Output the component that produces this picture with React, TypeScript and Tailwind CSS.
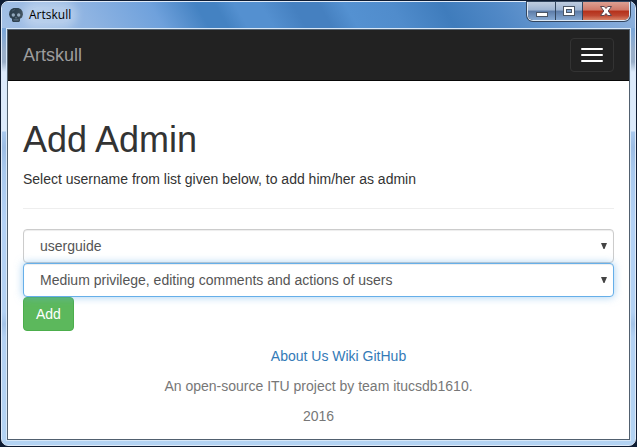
import React from "react";

function SkullIcon() {
  return (
    <svg viewBox="0 0 14 14" className="h-3.5 w-3.5 shrink-0" aria-hidden="true">
      <path
        d="M4.500 0h5l2.500 1.200L13.500 3.500 14 6.500l-1 3-2 1.200V13l-1 1H4l-1-1v-2.300L1 9.500 0 6.500.5 3.500 2 1.200z"
        fill="#2f4250"
      />
      <circle cx="4.300" cy="7" r="1.700" fill="#93a9bd" />
      <circle cx="9.700" cy="7" r="1.700" fill="#93a9bd" />
      <path d="M6.300 10.200L7 8.800l.7 1.400z" fill="#93a9bd" />
      <path d="M4.500 11.500h5v.8h-5z" fill="#70869a" />
      <path d="M3 3.200L6 1.500" stroke="#4c6171" strokeWidth=".8" />
    </svg>
  );
}

function WindowControls() {
  return (
    <div className="flex h-[19px] overflow-hidden rounded-b-md border border-t-0 border-[#dce8f5] bg-[#33465f] ring-1 ring-[#33465f]">
      <button
        aria-label="Minimize"
        className="flex w-7 items-center justify-center border-r border-[#33465f] bg-[linear-gradient(#bfcde0_0%,#9db3d1_45%,#5c7ba7_50%,#86a9d3_100%)]"
      >
        <svg viewBox="0 0 12 5" className="mt-1.5 h-[5px] w-3" aria-hidden="true">
          <rect x=".5" y=".5" width="11" height="4" fill="#fff" stroke="#4b5666" />
        </svg>
      </button>
      <button
        aria-label="Maximize"
        className="flex w-[27px] items-center justify-center border-r border-[#33465f] bg-[linear-gradient(#bfcde0_0%,#9db3d1_45%,#5c7ba7_50%,#86a9d3_100%)]"
      >
        <svg viewBox="0 0 12 10" className="h-2.5 w-3" aria-hidden="true">
          <rect x=".5" y=".5" width="11" height="9" fill="#fff" stroke="#4b5666" />
          <rect x="3.5" y="3.5" width="5" height="3" fill="#7fa3cf" stroke="#4b5666" />
        </svg>
      </button>
      <button
        aria-label="Close"
        className="flex w-[46px] items-center justify-center bg-[linear-gradient(#dda093_0%,#cf7868_45%,#b5301a_50%,#bd4630_75%,#d98468_100%)]"
      >
        <svg viewBox="0 0 12 10" className="h-2.5 w-3" aria-hidden="true">
          <path
            d="M.5.5h3.800L6 2.500 7.700.5h3.800L8.200 5l3.300 4.500H7.700L6 7.500l-1.700 2H.5L3.800 5z"
            fill="#fff"
            stroke="#5b4650"
          />
        </svg>
      </button>
    </div>
  );
}

function SelectField({
  label,
  options,
  focused = false,
}: {
  label: string;
  options: string[];
  focused?: boolean;
}) {
  return (
    <div className="relative">
      <select
        aria-label={label}
        className={
          "block h-[34px] w-full appearance-none rounded border bg-white px-4 text-sm text-[#555] outline-none " +
          (focused
            ? "border-[#66afe9] shadow-[inset_0_1px_1px_rgba(0,0,0,0.075),0_0_8px_rgba(102,175,233,0.6)]"
            : "border-[#ccc] shadow-[inset_0_1px_1px_rgba(0,0,0,0.075)]")
        }
      >
        {options.map((option) => (
          <option key={option}>{option}</option>
        ))}
      </select>
      <svg
        viewBox="0 0 6 6"
        className="pointer-events-none absolute top-3.5 right-[7px] h-1.5 w-1.5"
        aria-hidden="true"
      >
        <path d="M0 0h6L3.500 6h-1z" fill="#444" />
      </svg>
    </div>
  );
}

export default function App() {
  return (
    <div className="flex min-h-screen flex-col bg-[#0e1c33] p-px font-['Liberation_Sans',Arial,sans-serif] text-sm leading-5 text-[#333]">
      <div className="flex grow flex-col rounded-[7px] border border-[#dfeaf8] bg-[linear-gradient(#85aedd_0px,#7ba6d8_28px,#9aafc9_50px,#9aafc9_60px,#dceafb_70px,#dceafb_129px,#a9c9ee_130px,#9dbde4_145px,#a9c9ee_170px,#b3d1f5_220px,#b3d1f3_310px,#a3c3e8_322px,#b3d1f3_335px,#b3d3f3_100%)]">
        <header className="flex h-[26px] items-start justify-between rounded-t-md bg-[linear-gradient(60deg,#a3c0e5_0%,#8fb4e2_14%,#6fa1dc_25%,#4482c2_32%,#4482c2_35%,#5490d0_38%,#5490d0_42%,#4580c0_47%,#4580c0_51%,#5491d1_55%,#508ccc_62%,#3f7cbc_70%,#5088c6_78%,#7ba5d8_92%,#8fb2dd_100%)] pr-[5px] pl-[7px]">
          <div className="flex h-[26px] items-center gap-1.5">
            <SkullIcon />
            <span className="rounded-full bg-white/30 font-['Open_Sans',sans-serif] text-xs leading-4 text-black shadow-[0_0_8px_6px_rgba(255,255,255,0.3)]">
              Artskull
            </span>
          </div>
          <WindowControls />
        </header>

        <div className="mx-1 mb-1 flex grow flex-col border border-[#d8e8f8]">
          <div className="flex grow flex-col border border-[#51606f] bg-white">
            <nav className="flex h-[51px] items-center justify-between border-b border-[#080808] bg-[#222] px-[15px]">
              <a href="#" className="text-lg leading-5 text-[#9d9d9d]">
                Artskull
              </a>
              <button
                aria-label="Toggle navigation"
                className="flex flex-col gap-1 rounded border border-[#333] px-2.5 py-[9px]"
              >
                <span className="h-0.5 w-[22px] rounded-[1px] bg-white" />
                <span className="h-0.5 w-[22px] rounded-[1px] bg-white" />
                <span className="h-0.5 w-[22px] rounded-[1px] bg-white" />
              </button>
            </nav>

            <main className="px-[15px] pt-[39px]">
              <h1 className="mb-2.5 text-4xl leading-[39px]">Add Admin</h1>
              <p>Select username from list given below, to add him/her as admin</p>
              <hr className="mt-[19px] mb-5 border-[#eee]" />
              <form>
                <SelectField label="Username" options={["userguide"]} />
                <SelectField
                  label="Privilege"
                  options={["Medium privilege, editing comments and actions of users"]}
                  focused
                />
                <button
                  type="button"
                  className="block h-[34px] rounded border border-[#4cae4c] bg-[#5cb85c] px-3 text-white"
                >
                  Add
                </button>
              </form>
            </main>

            <footer className="flex flex-col gap-2.5 px-[15px] pt-[15px] pb-2.5 text-center text-[#777]">
              <p className="pl-10 text-[#337ab7]">
                <a href="#">About Us</a> <a href="#">Wiki</a> <a href="#">GitHub</a>
              </p>
              <p>An open-source ITU project by team itucsdb1610.</p>
              <p>2016</p>
            </footer>
          </div>
        </div>
      </div>
    </div>
  );
}
